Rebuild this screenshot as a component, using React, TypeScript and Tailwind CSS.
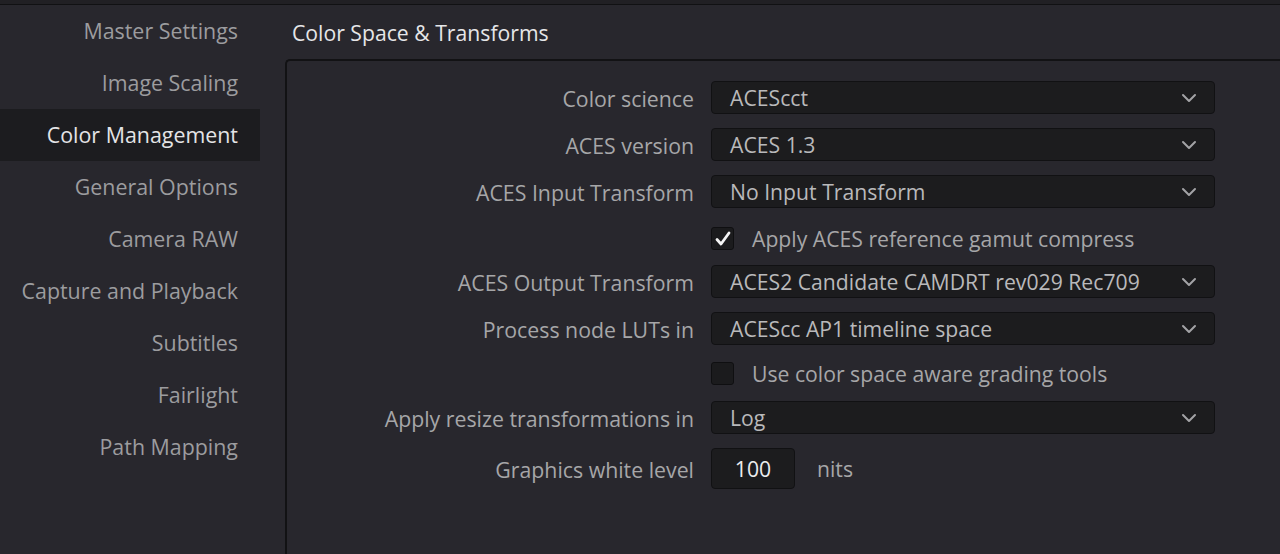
import React from "react";

const sidebar = [
  "Master Settings",
  "Image Scaling",
  "Color Management",
  "General Options",
  "Camera RAW",
  "Capture and Playback",
  "Subtitles",
  "Fairlight",
  "Path Mapping",
];

function Chevron() {
  return (
    <svg width="16" height="10" viewBox="0 0 16 10" className="shrink-0">
      <path d="M2 2 L8 8 L14 2" fill="none" stroke="#a3a3a6" strokeWidth="2" strokeLinecap="round" strokeLinejoin="round" />
    </svg>
  );
}

function Label({ children }: { children: React.ReactNode }) {
  return (
    <div className="w-[424px] shrink-0 text-right pr-[17px] pt-[2px] text-[#a6a6a8] text-[21.3px]">{children}</div>
  );
}

function Dropdown({ label, value, mt }: { label: string; value: string; mt: string }) {
  return (
    <div className={`flex items-center h-[33px] ${mt}`}>
      <Label>{label}</Label>
      <div className="flex items-center justify-between w-[504px] h-[33px] rounded-[4px] border border-[#111113] bg-[#1c1c1e] pl-[18px] pr-[17px] text-[#b9b9bb] text-[21.2px]">
        <span>{value}</span>
        <Chevron />
      </div>
    </div>
  );
}

function Check({ label, checked, mt }: { label: string; checked: boolean; mt: string }) {
  return (
    <div className={`flex items-center h-[33px] ${mt}`}>
      <div className="w-[424px] shrink-0" />
      <div className="w-[23px] h-[23px] rounded-[3px] border border-[#0f0f11] bg-[#1b1b1d] flex items-center justify-center">
        {checked && (
          <svg width="18" height="18" viewBox="0 0 18 18">
            <path d="M3 9.5 L7 14 L15 3" fill="none" stroke="#f4f4f4" strokeWidth="2.8" strokeLinecap="round" strokeLinejoin="round" />
          </svg>
        )}
      </div>
      <span className="ml-[18px] text-[#a6a6a8] text-[21.2px]">{label}</span>
    </div>
  );
}

export default function App() {
  return (
    <div
      className="w-[1280px] h-[554px] bg-[#28272d] flex flex-col overflow-hidden text-[21.4px]"
      style={{ fontFamily: '"Open Sans", "Noto Sans", sans-serif' }}
    >
      <div className="h-[4px] bg-[#212024] shrink-0" />
      <div className="h-[1px] bg-[#111113] shrink-0" />
      <div className="flex flex-1 min-h-0">
        <div className="w-[260px] shrink-0 flex flex-col">
          {sidebar.map((s) => {
            const active = s === "Color Management";
            return (
              <div
                key={s}
                className={`h-[52px] flex items-center justify-end pr-[22px] ${active ? "bg-[#1c1c1f] text-[#e4e4e6]" : "text-[#9c9c9f]"}`}
              >
                {s}
              </div>
            );
          })}
        </div>
        <div className="flex-1 flex flex-col min-w-0">
          <div className="h-[54px] shrink-0 flex items-center pl-[32px] pt-[2px] text-[#e6e6e8] text-[21.2px]">
            Color Space &amp; Transforms
          </div>
          <div className="flex-1 ml-[25px] border-t-2 border-l-2 border-[#121214] rounded-tl-[5px] pt-[20px] flex flex-col">
            <Dropdown label="Color science" value="ACEScct" mt="" />
            <Dropdown label="ACES version" value="ACES 1.3" mt="mt-[14px]" />
            <Dropdown label="ACES Input Transform" value="No Input Transform" mt="mt-[14px]" />
            <Check label="Apply ACES reference gamut compress" checked mt="mt-[14px]" />
            <Dropdown label="ACES Output Transform" value="ACES2 Candidate CAMDRT rev029 Rec709" mt="mt-[10px]" />
            <Dropdown label="Process node LUTs in" value="ACEScc AP1 timeline space" mt="mt-[14px]" />
            <Check label="Use color space aware grading tools" checked={false} mt="mt-[12px]" />
            <Dropdown label="Apply resize transformations in" value="Log" mt="mt-[11px]" />
            <div className="flex items-center h-[41px] mt-[14px]">
              <Label>Graphics white level</Label>
              <div className="w-[84px] h-[41px] rounded-[4px] border border-[#111113] bg-[#1c1c1e] flex items-center justify-center text-[#ececee] text-[21.2px]">
                100
              </div>
              <span className="ml-[22px] text-[#a6a6a8] text-[21.2px]">nits</span>
            </div>
          </div>
        </div>
      </div>
    </div>
  );
}
